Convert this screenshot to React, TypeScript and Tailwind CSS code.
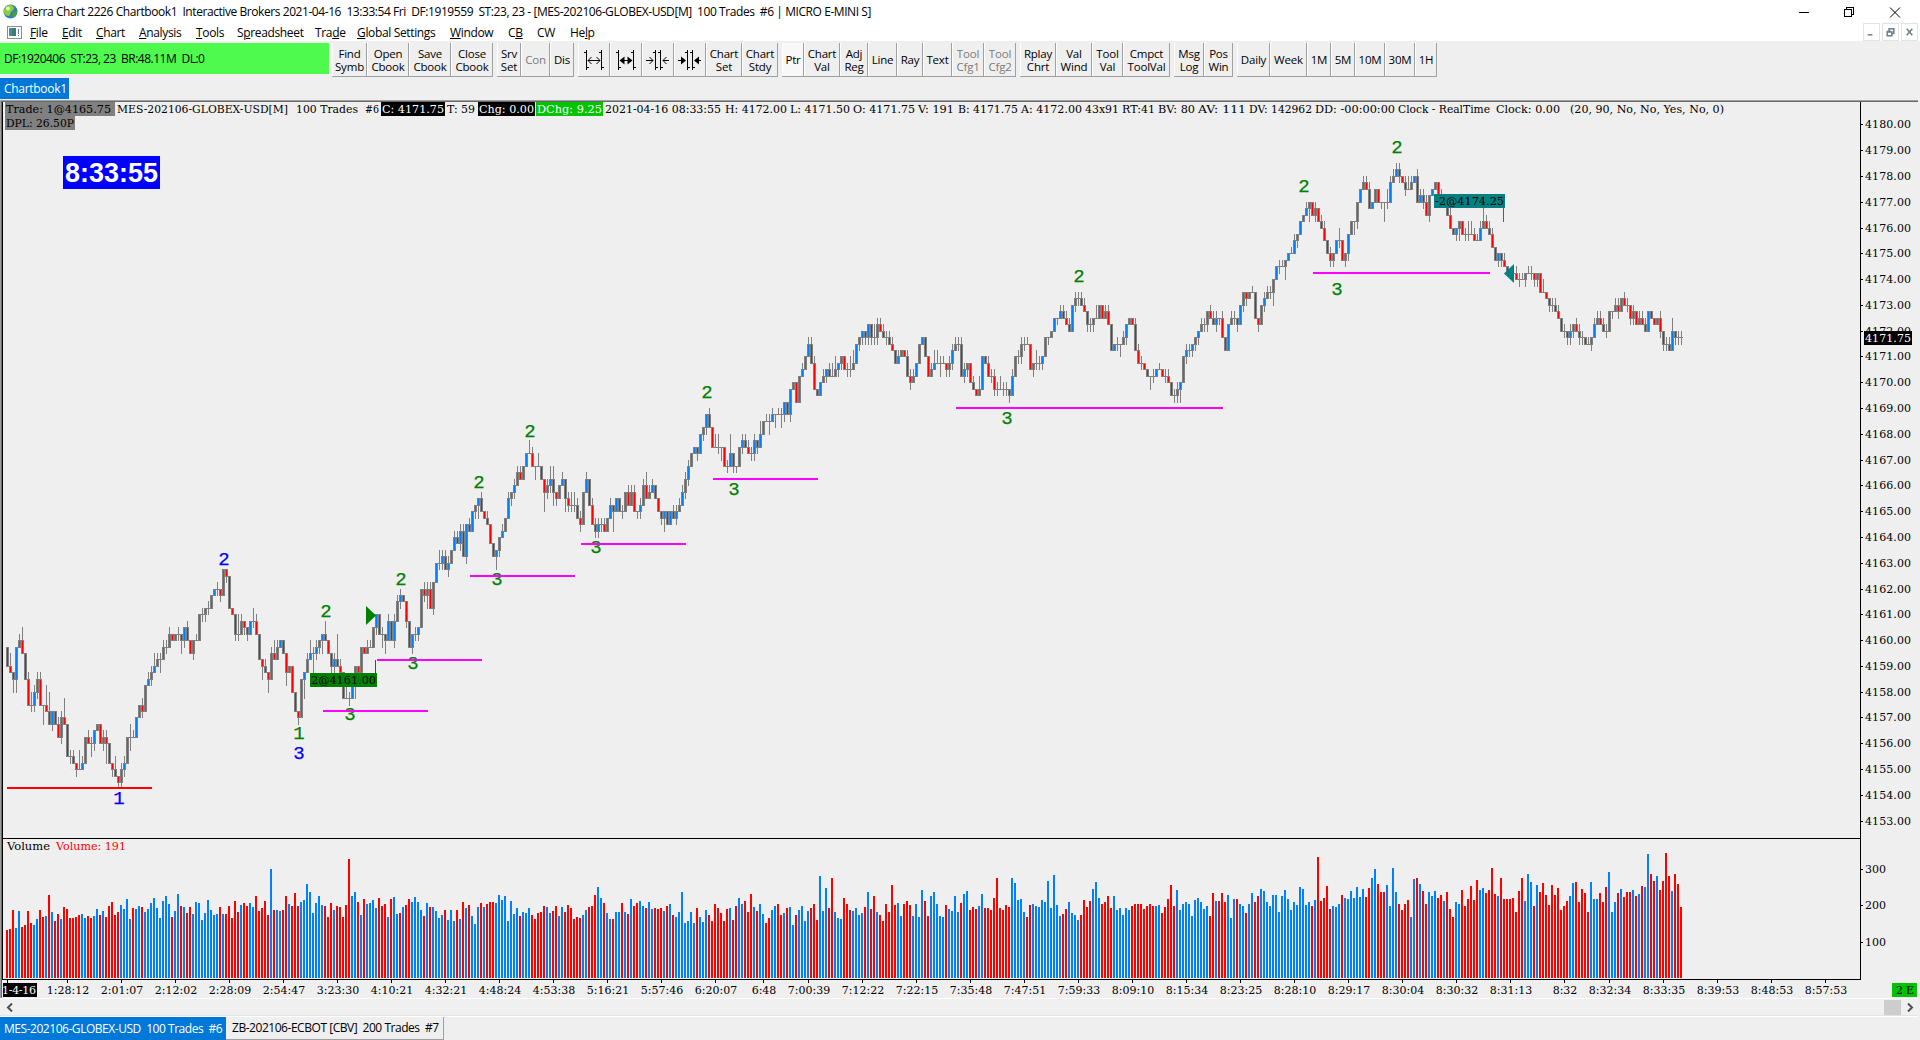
import React from 'react';

interface Bar {
    open: number;
    close: number;
    high: number;
    low: number;
}

interface VolumeBar {
    up: boolean;
    height: number;
}

interface ToolButton {
    lines?: string[];
    icon?: number;
    width: string;
    disabled?: boolean;
    pressed?: boolean;
}

// Close of each bar in quarter points above 4150, "+n" / "-n" are wick ticks beyond the body
const priceData = `
36 35+2 34-2 39-2 40+1 38+2 34 30+1 30+2-1 32+1-1 34+1-1 30+1 30-3 29+3 27+3 29-1 27 25+1 28+1-1 27+3
22 22+1-1 21+1 20-1 20+3 21+1 25 24+1 24+1-2 26-1 27 24 25+1-1 24+1-3 21 20-1 19+2 18-1 20+1-1 21+1-1
25 25+2-2 25+1 28 30 29+1-1 33 34+1 35+1-1 36+2 37+1 37+1-2 39+1 39+1-1 41+1 40 41 41+1-1 40-2 42-1
40+1 38 40-1 40+1 44 44+1-1 45-1 45+1-1 47 48 48+1-1 47-1 51 50-1 45 44 41-1 41+3-1 43+1 42-1
41-1 43 43+2-1 41+1 37 36-2 35+1 34-2 38+1 37+2 39+1 40 38 35-2 36 32 29 28-1 34 35-3
37+1 38+2 38+1-3 39+1-1 40-1 41-2 40+2 38 36-1 37+1-1 36+4 35+1 31 31+2 31+1-1 34 36-3 35 39 38
39+1 39+1 42 44-1 41 41+1-2 40-2 43+1 40 43+1-1 46+1 47+1-1 46 43-1 39 41-1 41+1-1 42-1 48 47+1-1
48+1-2 45+1 49-1 52 52+2-1 53+1-1 51+1 52+1-1 54 56+1 55+1 57+1-1 53+1 58-1 57+1 60 61-1 62-2 60+1 59
58+1 55 53 54-2 56-1 57+1 59 62+1 63-1 64+1-1 66+1 65+1 67 69 69+2 67+1 67-2 67+2 65 63-3
64+1-1 65+2-1 63+2-2 62-1 64 65+1 62-2 61+1-1 61+2-1 61+2-1 59+1 58+1-1 63 65+1 61 58+1 57+1-1 58+1-1 58+1-1 57+1
59 61+1 60-3 62 60 60+1-1 63 61+1 63+1 60+1 60-1 61+1-1 64+1 62+2 63+1 64+1 62 60 59-1 60-2
58 60 59+1 60+1-1 61+1 63+1 65+1-1 67+1-1 69 70 69-1 72 73-1 75-1 73+1 70 70+2 70+2-1 70-2 67
67+1-1 69+3 67-1 67-1 70 71+1-1 70+1 69+1 69+1-1 71+1-1 70-1 72+2 74 74+1 74+1-2 75+1 75-2 75+1 75+1-2 77-1
75 79-1 80 77 81 82+1 84 86+1 83+1 79+1 78 80 81+1 82-1 81+1 81+2 82+2 83-1 84-1 82
82+1-1 82+2-1 83+2 86 87-1 88-1 87-1 89-1 87-1 87+2-1 89+1-1 88+1 87+1 87+1-1 86+1 85+1 83 84+1 85 84
81+1 80+1-1 81+1 83 86 87 84 81 82+1 83+2 83+2 83+1-2 83+1 82-1 83+1-1 85+1-1 86+1 86+1-1 81+1 82+1-1
83-1 80 79+1 78 79+2 84 83 81+1 81+1-1 79+1-1 79+1-1 79+2 79+1-1 79+1-1 78-1 81+1 84 84+1-1 86+1-1 86+1-1
86+1 82 83-1 83+2-1 83+1-1 84-1 87 87-1 88 90 90-1 91+1 90+1 89+1 88+1 92 93+1-1 93+1-1 92+1 91+1
89-1 89+1-1 90-1 90+2 92 90 91+1 89+1 85 86 86+1-1 86-2 87+1 89-1 90 89 85+1 83+1 83+1-1 82
81 81-2 81+1-1 82 82+1 81 81+1-1 80+1 78 78+1-1 79+1-1 80-2 84 85+1-1 85+1-1 86-1 87-1 88-1 89+1 89+1-1
91-1 90+1 89+1 90+1-1 90-1 87+1 85 89 90+1 90+1-1 89-1 92 94-1 93-1 94 94+1 90 89-1 92 93+1-1
94+1 94+1-1 96-2 98 98+1-1 98+1 99-2 100 100+1 102+1 103-1 105 106 107+1 108-2 106 107+1-1 105 104+1 102+1
100 99+1-1 100-1 102 102+2-1 99 100-1 103-1 105 105-2 108-1 110 111+1 110+1 107+1 108 110 108 108-1 108-3
108+2-1 111+1 112+1 113+1 112+1-1 111 110+1-1 110+2 111+1 112 108+1 109+1 108+1-1 106+1 109-1 110 111 109 109+1 108
106 104+1 103 104-1 105-2 103 103+1-1 103+2-1 103+2 102+1 102+1 104+1 105+2 104+1 103+1 101+1 99 100-1 99-1 98+1
97 97 97-1 96+1 96+1-1 96+1 97-1 97+1 97+1-1 96-1 97-1 94 94+2 93 92-1 92+1-1 91+1 90+1 88 88+1-1
87-1 88+1-1 89-1 88+1 87+1-1 87+1-1 86 86+1 87-1 89+1 90+1 89+1 88+1 88+1-1 91 91-1 92+1 91+1-1 93 92+1
92+1-1 90-1 91+1-1 89 90+1 89+1 88+1 91 90 89 90 88+1-1 86-1 86+1-1 85+1 88+2 87-1 87+1-1 87+1-1`;

// Bar heights in pixels, "b" starts a run of up bars and "r" a run of down bars
const volumeData = `
r48 49 68 b50 67 r51 53 67 55 b53 59 r68 61 b62 r83 b66 r57 64 b59 r71 69 60 60 61 63 b64 60 r62 60 b62 69 r63 b67 r61 72 76 63 66
b73 69 79 59 r70 b69 72 r71 b66 69 75 80 70 60 77 82 74 r61 b67 84 r72 b71 r65 71 b64 76 75 58 65 78 68 63 64 r71 b64 r64 72 60 77 66
b73 r75 72 b75 71 r82 67 70 77 63 b109 r68 b68 67 r68 82 b74 r72 85 72 b76 78 94 86 65 75 82 73 r72 61 75 b68 r72 71 61 73 119
b82 86 r76 b63 r79 b74 75 78 70 r80 72 74 b61 r79 b81 64 r65 b71 r73 79 b76 81 76 68 r62 b75 r71 b71 67 60 63 r68 b58 68 57 r68 b59
r76 b70 r73 b62 54 71 r75 b71 r74 76 76 b75 83 78 82 57 77 64 70 r62 b66 65 70 r63 59 65 66 72 b71 65 r67 72 b62 71 r66 73 70 59 61 60
b63 68 r71 72 83 b91 80 r75 b65 59 r59 b66 66 r75 b66 r64 b79 r72 75 b77
b72 r70 b76 69 r70 69 70 b67 r72 b74 r63 b61 66 86 55 57 66 55 r70 b61 56 68 r63 57 74 70 65 57 69 b70 r58 72 b80 74 r77 66 84 b71 r67
b74 64 r55 60 b68 72 r74 63 b65 r70 b71 53 r63 b68 72 57 67 r70 74 58 b102 67 90 r70 100 b66 60 59 r80 74 68 b67 70 63 65 r71 b86 r69 82
b66 r63 57 74 66 93 73 b75 62 r74 77 73 b62 74 61 88 r77 62 b82 86 74 62 61 r73 b69 67 82 66 r75 b84 87 r68 71 69 b72 84
r70 70 68 80 100 70 68 73 71 b100 95 78 79 66 r61 73 b74 72 71 78 76 97 70 103 73 62 r64 69 b76 65 63 58 r63 78 71 77 b89 96 80
r74 76 82 70 b82 68 70 63 70 68 r72 74 74 74 69 72 74 72 b72 73 r65 71 79 93 72 b88 68 74 76 74 62 78 80 76 69 72 r62 85 b77 r77 85 76
b83 60 79 r79 b74 72 r65 b74 85 r76 82 b89 87 76 72 83 83 66
b82 88 79 68 76 73 91 89 73 76 r72 b78 r121 77 80 92 69 b72 71 74 r83 b80 79 87 80 91 81 89 r81 90 b100 109 r94 86 86 b93 72 110 86
r74 68 74 78 b61 99 r100 b94 r87 74 b86 82 87 r80 83 b77 r86 69 61 b76 74 r88 72 79 92 78 98 b88 90 r85 88 110 84 b82 r100 79 79 79 80 66 87 100
b77 104 96 r72 b93 r86 95 83 73 93 83 90 68 72 77 b82 95 r96 76 89 85 66 b96 79 79 r85 76 91 b106 66 76 r85 b89 r81 86 86 b88 r82 b84 r92
b91 124 r104 97 b102 r88 97 125 102 b87 r104 94 71`;

const parsePrices = (data: string): Bar[] => {
    let last = 39;
    return data.trim().split(/\s+/).map((token) => {
        const match = token.match(/^(\d+)(?:\+(\d+))?(?:-(\d+))?$/);
        const close = Number(match?.[1] ?? last);
        const open = last;
        last = close;
        return {
            open,
            close,
            high: Math.max(open, close) + Number(match?.[2] ?? 0),
            low: Math.min(open, close) - Number(match?.[3] ?? 0)
        };
    });
};

const parseVolume = (data: string): VolumeBar[] => {
    let up = false;
    return data.trim().split(/\s+/).map((token) => {
        if (/^[br]/.test(token)) up = token[0] === 'b';
        return { up, height: Number(token.replace(/^[br]/, '')) };
    });
};

const bars = parsePrices(priceData);
const volumes = parseVolume(volumeData);

const tickY = (tick: number) => Math.round(569.2 - (tick - 51) * 6.447);
const barX = (index: number) => 7 + index * 3;

const timeLabels: [number, string][] = [
    [67, '1:28:12'], [121, '2:01:07'], [175, '2:12:02'], [229, '2:28:09'], [283, '2:54:47'], [337, '3:23:30'],
    [391, '4:10:21'], [445, '4:32:21'], [499, '4:48:24'], [553, '4:53:38'], [607, '5:16:21'], [661, '5:57:46'],
    [715, '6:20:07'], [763, '6:48'], [808, '7:00:39'], [862, '7:12:22'], [916, '7:22:15'], [970, '7:35:48'],
    [1024, '7:47:51'], [1078, '7:59:33'], [1132, '8:09:10'], [1186, '8:15:34'], [1240, '8:23:25'], [1294, '8:28:10'],
    [1348, '8:29:17'], [1402, '8:30:04'], [1456, '8:30:32'], [1510, '8:31:13'], [1564, '8:32'], [1609, '8:32:34'],
    [1663, '8:33:35'], [1717, '8:39:53'], [1771, '8:48:53'], [1825, '8:57:53']
];

// Swing numbers: x, centre y, label, colour
const swings: [number, number, string, string][] = [
    [119, 798, '1', '#0000ff'], [224, 559, '2', '#0000ff'], [299, 753, '3', '#0000ff'], [299, 733, '1', '#008000'],
    [326, 611, '2', '#008000'], [350, 714, '3', '#008000'], [401, 579, '2', '#008000'], [413, 663, '3', '#008000'],
    [479, 482, '2', '#008000'], [497, 579, '3', '#008000'], [530, 431, '2', '#008000'], [596, 547, '3', '#008000'],
    [707, 392, '2', '#008000'], [734, 489, '3', '#008000'], [1007, 418, '3', '#008000'], [1079, 276, '2', '#008000'],
    [1304, 186, '2', '#008000'], [1337, 289, '3', '#008000'], [1397, 147, '2', '#008000']
];

// Support lines: x1, x2, top y
const supports: [number, number, number][] = [
    [323, 428, 710], [377, 482, 659], [470, 575, 575], [581, 686, 543], [713, 818, 478], [956, 1223, 407], [1313, 1490, 272]
];

// Header values: x, width, text
const headerValues: [number, number, string][] = [
    [117, 171, 'MES-202106-GLOBEX-USD[M]'], [296, 62, '100 Trades'], [365, 14, '#6'], [447, 28, 'T: 59'],
    [605, 116, '2021-04-16 08:33:55'], [725, 62, 'H: 4172.00'], [790, 60, 'L: 4171.50'], [853, 62, 'O: 4171.75'],
    [918, 36, 'V: 191'], [958, 60, 'B: 4171.75'], [1021, 61, 'A: 4172.00'], [1085, 34, '43x91'], [1122, 33, 'RT:41'],
    [1158, 37, 'BV: 80'], [1198, 48, 'AV: 111'], [1249, 63, 'DV: 142962'], [1315, 80, 'DD: -00:00:00'],
    [1398, 92, 'Clock - RealTime'], [1496, 64, 'Clock: 0.00'], [1570, 154, '(20, 90, No, No, Yes, No, 0)']
];

const toolGroups: ToolButton[][] = [
    [
        { lines: ['Find', 'Symb'], width: 'w-[35px]' },
        { lines: ['Open', 'Cbook'], width: 'w-[42px]' },
        { lines: ['Save', 'Cbook'], width: 'w-[42px]' },
        { lines: ['Close', 'Cbook'], width: 'w-[42px]' }
    ],
    [
        { lines: ['Srv', 'Set'], width: 'w-[24px]' },
        { lines: ['Con'], width: 'w-[29px]', disabled: true },
        { lines: ['Dis'], width: 'w-[24px]' }
    ],
    [
        { icon: 0, width: 'w-[32px]' },
        { icon: 1, width: 'w-[32px]' },
        { icon: 2, width: 'w-[32px]' },
        { icon: 3, width: 'w-[32px]' },
        { lines: ['Chart', 'Set'], width: 'w-[36px]' },
        { lines: ['Chart', 'Stdy'], width: 'w-[36px]' }
    ],
    [
        { lines: ['Ptr'], width: 'w-[22px]', pressed: true },
        { lines: ['Chart', 'Val'], width: 'w-[36px]' },
        { lines: ['Adj', 'Reg'], width: 'w-[28px]' },
        { lines: ['Line'], width: 'w-[29px]' },
        { lines: ['Ray'], width: 'w-[26px]' },
        { lines: ['Text'], width: 'w-[29px]' },
        { lines: ['Tool', 'Cfg1'], width: 'w-[32px]', disabled: true },
        { lines: ['Tool', 'Cfg2'], width: 'w-[32px]', disabled: true }
    ],
    [
        { lines: ['Rplay', 'Chrt'], width: 'w-[36px]' },
        { lines: ['Val', 'Wind'], width: 'w-[36px]' },
        { lines: ['Tool', 'Val'], width: 'w-[31px]' },
        { lines: ['Cmpct', 'ToolVal'], width: 'w-[47px]' }
    ],
    [
        { lines: ['Msg', 'Log'], width: 'w-[30px]' },
        { lines: ['Pos', 'Win'], width: 'w-[29px]' }
    ],
    [
        { lines: ['Daily'], width: 'w-[33px]' },
        { lines: ['Week'], width: 'w-[37px]' },
        { lines: ['1M'], width: 'w-[24px]' },
        { lines: ['5M'], width: 'w-[24px]' },
        { lines: ['10M'], width: 'w-[30px]' },
        { lines: ['30M'], width: 'w-[30px]' },
        { lines: ['1H'], width: 'w-[22px]' }
    ]
];

const menuItems: [string, number, string][] = [
    ['File', 0, 'w-[32px]'], ['Edit', 0, 'w-[34px]'], ['Chart', 0, 'w-[43px]'], ['Analysis', 0, 'w-[57px]'],
    ['Tools', 0, 'w-[41px]'], ['Spreadsheet', 1, 'w-[78px]'], ['Trade', 3, 'w-[42px]'], ['Global Settings', 0, 'w-[93px]'],
    ['Window', 0, 'w-[58px]'], ['CB', 1, 'w-[29px]'], ['CW', -1, 'w-[33px]'], ['Help', 2, 'w-[40px]']
];

const SpacingIcon: React.FC<{ kind: number }> = ({ kind }) => {
    const bold = kind % 2 === 1;
    if (kind < 2) {
        return (
            <svg className="h-5 w-5" viewBox="0 0 20 20" fill="none" stroke="#000">
                <path d="M2.500 0v20M0 2.500h2M3 17.500h2M17.500 0v20M15 2.500h2M18 17.500h2" shapeRendering="crispEdges" />
                <path d="M4 10.500h12" shapeRendering="crispEdges" />
                {bold
                    ? <path d="M3.500 10.500l5-4v8zM16.500 10.500l-5-4v8z" fill="#000" stroke="none" />
                    : <path d="M7.500 7L4 10.500L7.500 14M12.500 7L16 10.500L12.500 14" />}
            </svg>
        );
    }
    return (
        <svg className="h-5 w-[24px]" viewBox="0 0 24 20" fill="none" stroke="#000">
            <path d="M9.500 0v20M7 2.500h2M10 17.500h2M14.500 0v20M12 2.500h2M15 17.500h2" shapeRendering="crispEdges" />
            <path d="M0 10.500h7M17 10.500h6" shapeRendering="crispEdges" />
            {bold
                ? <path d="M8 10.500l-5-4v8zM16 10.500l5-4v8z" fill="#000" stroke="none" />
                : <path d="M3.500 7L7 10.500L3.500 14M20.500 7L17 10.500L20.500 14" />}
        </svg>
    );
};

const TitleBar: React.FC = () => (
    <div className="flex h-[23px] shrink-0 items-center bg-white">
        <svg className="ml-[3px] h-[15px] w-[15px]" viewBox="0 0 15 15">
            <circle cx="7.500" cy="7.500" r="7" fill="#2f7fb5" />
            <path d="M1 6C2 2 6 0 9 1.500C12 3 11 6 9 7C7 8 8 10 6 12C3 12 0 9 1 6z" fill="#8ccf3c" />
            <path d="M10 8c2-1 4-1 4 0c0 3-2 5-4 5.500c-1-2-1-4 0-5.500z" fill="#4f9d3a" />
            <circle cx="5" cy="4.500" r="2" fill="#e9f6b8" />
        </svg>
        <span className="ml-[5px] whitespace-pre text-[12px] tracking-[-0.43px]">
            {'Sierra Chart 2226 Chartbook1  Interactive Brokers 2021-04-16  13:33:54 Fri  DF:1919559  ST:23, 23 - [MES-202106-GLOBEX-USD[M]  100 Trades  #6 | MICRO E-MINI S]'}
        </span>
        <svg className="ml-auto mr-[19px] h-5 w-[102px]" viewBox="0 0 102 20" fill="none" stroke="#000">
            <path d="M0 10.500h10" shapeRendering="crispEdges" />
            <path d="M45.500 7.500h7v7h-7zM47.500 7.500v-2h7v7h-2" shapeRendering="crispEdges" />
            <path d="M91 5.500l10 10M101 5.500l-10 10" />
        </svg>
    </div>
);

const MenuBar: React.FC = () => (
    <div className="flex h-[18px] shrink-0 items-center bg-white">
        <svg className="ml-[7px] mr-[8px] h-[13px] w-[15px]" viewBox="0 0 15 13" shapeRendering="crispEdges">
            <path d="M.5.5h14v12H.5z" fill="#fff" stroke="#8c8c8c" />
            <path d="M2 2h7v8H2z" fill="#3d7b6b" />
            <path d="M2 2h3v8H2z" fill="#4d86a8" />
            <path d="M11 3h1v5h-1zM11 9h1v1h-1z" fill="#5a78b0" />
        </svg>
        {menuItems.map(([label, key, width]) => (
            <span key={label} className={`${width} shrink-0 whitespace-nowrap pt-px text-[12px] tracking-[-0.35px]`}>
                {key < 0 ? label : (
                    <>
                        {label.slice(0, key)}
                        <span className="underline underline-offset-1">{label[key]}</span>
                        {label.slice(key + 1)}
                    </>
                )}
            </span>
        ))}
        <div className="ml-auto mr-[2px] flex gap-[2px]">
            {['M4 11.500h5', 'M4.500 8.500h5v4h-5zM6.500 8v-3h5v5h-2M4 8h5M7 5h5', 'M5 5l6 7M11 5l-6 7'].map((d) => (
                <svg key={d} className="h-[18px] w-[17px] border border-[#e3e3e3]" viewBox="0 0 16 17" fill="none" stroke="#6f7d8c" strokeWidth="1.6">
                    <path d={d} />
                </svg>
            ))}
        </div>
    </div>
);

const ToolBar: React.FC = () => (
    <div className="flex h-[36px] shrink-0 pt-[2px]">
        <div className="flex h-[31px] w-[329px] items-center bg-[#4efa4e] pl-1 text-[12px] whitespace-pre tracking-[-0.5px]">
            {'DF:1920406  ST:23, 23  BR:48.11M  DL:0'}
        </div>
        <div className="ml-[3px] flex gap-[4px]">
            {toolGroups.map((group, index) => (
                <div key={index} className="flex h-[34px] border-b border-[#a0a0a0]">
                    {group.map((button, i) => (
                        <button
                            key={i}
                            className={`${button.width} flex shrink-0 flex-col items-center justify-center border-r border-l border-l-white border-r-[#a0a0a0] text-[11.5px] leading-[13px] tracking-[-0.2px] ${button.disabled ? 'text-[#7b7b7b]' : 'text-black'} ${button.pressed ? 'bg-[#f8f8f8]' : ''}`}
                        >
                            {button.icon !== undefined && <SpacingIcon kind={button.icon} />}
                            {button.lines?.map((line) => <span key={line}>{line}</span>)}
                        </button>
                    ))}
                </div>
            ))}
        </div>
    </div>
);

const Candles: React.FC = () => (
    <g shapeRendering="crispEdges">
        {bars.map((bar, i) => {
            const x = barX(i);
            const top = tickY(Math.max(bar.open, bar.close));
            const bottom = tickY(Math.min(bar.open, bar.close));
            const wickTop = tickY(bar.high);
            const wickBottom = tickY(bar.low);
            return (
                <g key={i}>
                    <rect x={x} y={wickTop} width={1} height={wickBottom - wickTop + 1} fill="#808080" />
                    <rect x={x - 1} y={top} width={3} height={bottom - top + 1} fill="#808080" />
                    {bottom > top && (
                        <rect x={x} y={top + 1} width={1} height={bottom - top - 1} fill={bar.close > bar.open ? '#0080ff' : '#ff0000'} />
                    )}
                </g>
            );
        })}
    </g>
);

const Volume: React.FC = () => (
    <g shapeRendering="crispEdges">
        {volumes.map((bar, i) => (
            <rect key={i} x={barX(i) - 1} y={978 - bar.height} width={2} height={bar.height} fill={bar.up ? '#0080ff' : '#ff0000'} />
        ))}
    </g>
);

const Chart: React.FC = () => (
    <svg className="block h-[898px] w-[1918px] shrink-0 text-[11px]" viewBox="0 100 1918 898" fontFamily="'DejaVu Serif', serif">
        {/* Frame and axes */}
        <g shapeRendering="crispEdges">
            <rect x={0} y={100} width={1918} height={1} fill="#a0a0a0" />
            <rect x={0} y={101} width={1918} height={1} fill="#696969" />
            <rect x={0} y={101} width={1} height={897} fill="#a0a0a0" />
            <rect x={1} y={102} width={1} height={896} fill="#696969" />
            <rect x={2} y={102} width={1} height={878} fill="#000" />
            <rect x={1860} y={102} width={1} height={878} fill="#000" />
            <rect x={2} y={838} width={1859} height={1} fill="#000" />
            <rect x={2} y={979} width={1859} height={1} fill="#000" />
            <rect x={7} y={980} width={1} height={3} fill="#000" />
        </g>

        {/* Price scale */}
        {Array.from({ length: 28 }, (_, i) => 4180 - i).map((price) => {
            const y = tickY((price - 4150) * 4);
            return (
                <g key={price}>
                    <rect x={1861} y={y} width={2} height={1} fill="#000" />
                    <text x={1865} y={y + 4} textLength={46}>{price}.00</text>
                </g>
            );
        })}
        <rect x={1864} y={331} width={48} height={14} fill="#000" />
        <text x={1865} y={342} textLength={46} fill="#fff">4171.75</text>

        {/* Volume scale */}
        {[[300, 869], [200, 905], [100, 942]].map(([label, y]) => (
            <g key={label}>
                <rect x={1861} y={y} width={2} height={1} fill="#000" />
                <text x={1865} y={y + 4}>{label}</text>
            </g>
        ))}

        {/* Time scale */}
        {timeLabels.map(([x, label]) => (
            <g key={label}>
                <rect x={x} y={980} width={1} height={3} fill="#000" />
                <text x={x + 1} y={994} textAnchor="middle">{label}</text>
            </g>
        ))}
        <rect x={3} y={983} width={34} height={14} fill="#000" />
        <text x={36} y={994} textAnchor="end" textLength={34} fill="#fff">1-4-16</text>
        <rect x={1892} y={983} width={25} height={14} fill="#00c400" />
        <text x={1896} y={994} textLength={18}>2 E</text>

        <Candles />
        <Volume />

        {/* Header line */}
        <rect x={5} y={102} width={110} height={14} fill="#808080" />
        <text x={6} y={113} textLength={105} lengthAdjust="spacingAndGlyphs">Trade: 1@4165.75</text>
        <rect x={5} y={116} width={70} height={14} fill="#808080" />
        <text x={6} y={127} textLength={68} lengthAdjust="spacingAndGlyphs">DPL: 26.50P</text>
        <rect x={381} y={102} width={64} height={14} fill="#000" />
        <text x={382} y={113} textLength={62} lengthAdjust="spacingAndGlyphs" fill="#fff">C: 4171.75</text>
        <rect x={478} y={102} width={57} height={14} fill="#000" />
        <text x={479} y={113} textLength={55} lengthAdjust="spacingAndGlyphs" fill="#fff">Chg: 0.00</text>
        <rect x={536} y={102} width={67} height={14} fill="#00c400" />
        <text x={537} y={113} textLength={65} lengthAdjust="spacingAndGlyphs" fill="#fff">DChg: 9.25</text>
        {headerValues.map(([x, width, text]) => (
            <text key={text} x={x} y={113} textLength={width} lengthAdjust="spacingAndGlyphs">{text}</text>
        ))}
        <text x={7} y={850} textLength={43} lengthAdjust="spacingAndGlyphs">Volume</text>
        <text x={56} y={850} textLength={70} lengthAdjust="spacingAndGlyphs" fill="#ff0000">Volume: 191</text>

        {/* Clock */}
        <rect x={63} y={156} width={97} height={33} fill="#0000ff" />
        <text x={65} y={182} textLength={93} lengthAdjust="spacingAndGlyphs" fontFamily="'Liberation Sans', sans-serif" fontSize={27} fontWeight={700} fill="#fff">8:33:55</text>

        {/* Swing labels and support lines */}
        {swings.map(([x, y, label, color]) => (
            <text key={`${x}-${y}`} x={x} y={y + 6} textAnchor="middle" fontFamily="'Liberation Mono', monospace" fontSize={19} fill={color} stroke={color} strokeWidth={0.25}>{label}</text>
        ))}
        {supports.map(([x1, x2, y]) => (
            <rect key={x1} x={x1} y={y} width={x2 - x1} height={2} fill="#ff00ff" />
        ))}
        <rect x={7} y={787} width={145} height={2} fill="#ff0000" />

        {/* Trade fills */}
        <path d="M366 606l10 9.500l-10 9.500z" fill="#008000" />
        <path d="M375.500 660v13" stroke="#008000" />
        <rect x={310} y={673} width={67} height={14} fill="#008000" />
        <text x={311} y={684} textLength={65} lengthAdjust="spacingAndGlyphs">2@4161.00</text>
        <path d="M1514 264l-10 9.500l10 9.500z" fill="#008080" />
        <path d="M1503.500 208v14" stroke="#008080" />
        <rect x={1434} y={194} width={71} height={14} fill="#008080" />
        <text x={1435} y={205} textLength={69} lengthAdjust="spacingAndGlyphs">-2@4174.25</text>
    </svg>
);

const ScrollBar: React.FC = () => (
    <div className="flex h-[19px] w-[1918px] shrink-0 items-center border-t border-b border-white bg-[#f0f0f0] shadow-[inset_0_-1px_0_#e3e3e3]">
        <svg className="ml-[6px] h-[9px] w-[8px]" viewBox="0 0 8 9" fill="none" stroke="#505050" strokeWidth="2">
            <path d="M6 .5l-4 4l4 4" />
        </svg>
        <div className="ml-auto h-[15px] w-[17px] bg-[#cdcdcd]" />
        <svg className="mr-[4px] ml-[5px] h-[9px] w-[8px]" viewBox="0 0 8 9" fill="none" stroke="#505050" strokeWidth="2">
            <path d="M2 .5l4 4l-4 4" />
        </svg>
    </div>
);

const App: React.FC = () => {
    return (
        <div className="flex h-[1040px] w-[1920px] flex-col overflow-hidden bg-[#efefef] font-['Open_Sans',sans-serif] text-black">
            <TitleBar />
            <MenuBar />
            <ToolBar />
            {/* Chartbook tab */}
            <div className="flex h-[23px] shrink-0 pt-px">
                <div className="flex h-[21px] w-[69px] items-center bg-[#0078d7] pl-1 text-[12px] tracking-[-0.3px] text-white">Chartbook1</div>
            </div>
            <Chart />
            <ScrollBar />
            {/* Window tabs */}
            <div className="flex h-[23px] shrink-0 text-[12px] whitespace-pre tracking-[-0.46px]">
                <div className="flex w-[226px] items-center bg-[#0078d7] pl-1 text-white">{'MES-202106-GLOBEX-USD  100 Trades  #6'}</div>
                <div className="flex w-[218px] items-center border-r border-b border-[#a0a0a0] pl-[6px]">{'ZB-202106-ECBOT [CBV]  200 Trades  #7'}</div>
            </div>
        </div>
    );
};

export default App;
